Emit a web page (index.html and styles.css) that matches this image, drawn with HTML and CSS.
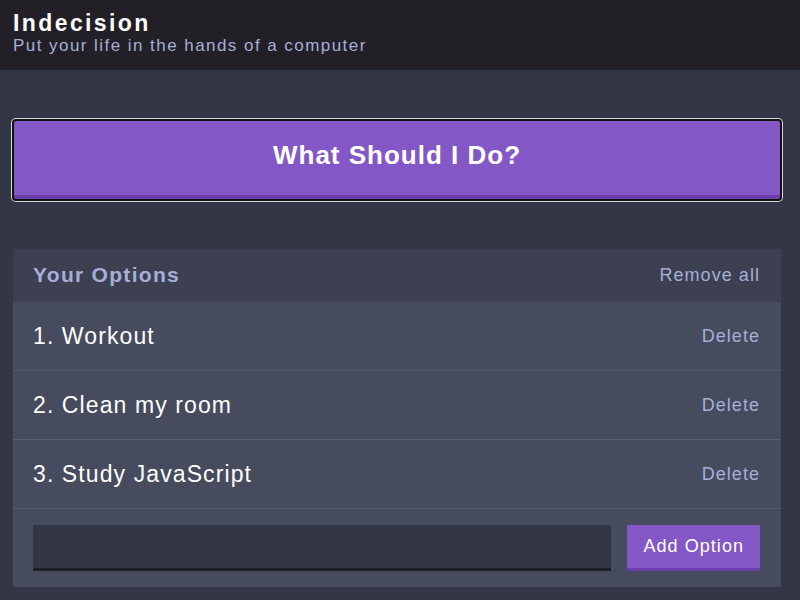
FILE: index.html
```html
<!DOCTYPE html>
<html lang="en">
<head>
<meta charset="utf-8">
<title>Indecision</title>
<link rel="stylesheet" href="styles.css">
</head>
<body>
  <header class="header">
    <div class="container">
      <h1 class="header__title">Indecision</h1>
      <h2 class="header__subtitle">Put your life in the hands of a computer</h2>
    </div>
  </header>
  <main class="container">
    <button class="big-button">What Should I Do?</button>
    <section class="widget">
      <div class="widget-header">
        <h3 class="widget-header__title">Your Options</h3>
        <button class="button--link remove-all">Remove all</button>
      </div>
      <div class="option">
        <p class="option__text">1. Workout</p>
        <button class="button--link">Delete</button>
      </div>
      <div class="option">
        <p class="option__text">2. Clean my room</p>
        <button class="button--link">Delete</button>
      </div>
      <div class="option">
        <p class="option__text">3. Study JavaScript</p>
        <button class="button--link">Delete</button>
      </div>
      <form class="add-option">
        <input class="add-option__input" type="text" name="option">
        <button class="button" type="button">Add Option</button>
      </form>
    </section>
  </main>
</body>
</html>
```
FILE: styles.css
```css
* {
  box-sizing: border-box;
}

html, body {
  margin: 0;
  padding: 0;
}

body {
  background: #333745;
  font-family: "Liberation Sans", Arial, Helvetica, sans-serif;
  color: #ffffff;
  height: 600px;
  overflow: hidden;
}

.container {
  padding: 0 19px 0 13px;
}

.header {
  background: #221f26;
  height: 70px;
  padding-top: 10px;
  margin-bottom: 50px;
}

.header__title {
  margin: 0;
  font-size: 23px;
  line-height: 26px;
  font-weight: bold;
  letter-spacing: 2.4px;
  color: #ffffff;
}

.header__subtitle {
  margin: 0;
  font-size: 17px;
  line-height: 20px;
  font-weight: normal;
  letter-spacing: 1.45px;
  color: #a5afd7;
}

.big-button {
  display: block;
  width: 100%;
  height: 80px;
  margin: 0 0 49px 0;
  padding: 20px 0 25px;
  background: #8357c5;
  border: none;
  border-bottom: 5px solid #6a3fab;
  border-radius: 3px;
  outline: 2px solid #121212;
  outline-offset: -1px;
  box-shadow: 0 0 0 2px #d8d8d8;
  color: #ffffff;
  font-family: inherit;
  font-size: 26px;
  line-height: 30px;
  font-weight: bold;
  letter-spacing: 1px;
  text-align: center;
}

.widget {
  background: #464b5e;
}

.widget-header {
  display: flex;
  justify-content: space-between;
  align-items: center;
  background: #3c4051;
  padding: 14px 21px 15px 20px;
  height: 53px;
}

.widget-header__title {
  margin: 0;
  font-size: 21px;
  line-height: 24px;
  font-weight: bold;
  letter-spacing: 1.3px;
  color: #a5afd7;
}

.button--link {
  background: none;
  border: none;
  padding: 0;
  margin: 0;
  font-family: inherit;
  font-size: 18px;
  line-height: 24px;
  letter-spacing: 1.05px;
  color: #a5afd7;
}

.option {
  display: flex;
  justify-content: space-between;
  align-items: center;
  padding: 20px 21px 20px 20px;
  height: 69px;
  border-bottom: 1px solid #575c73;
}

.option__text {
  margin: 0;
  font-size: 23px;
  line-height: 28px;
  letter-spacing: 1.1px;
  color: #ffffff;
}

.add-option {
  display: flex;
  padding: 16px 21px 16px 20px;
  height: 78px;
}

.add-option__input {
  flex: 1;
  height: 46px;
  margin: 0 16px 0 0;
  background: #333745;
  border: none;
  border-bottom: 3px solid #1e2028;
  color: #a5afd7;
  font-family: inherit;
  font-size: 18px;
  padding: 12px;
  outline: none;
}

.button {
  height: 46px;
  padding: 0 16px;
  background: #8357c5;
  border: none;
  border-bottom: 3px solid #6a3fab;
  color: #ffffff;
  font-family: inherit;
  font-size: 18px;
  letter-spacing: 1.05px;
  line-height: 43px;
}
```
